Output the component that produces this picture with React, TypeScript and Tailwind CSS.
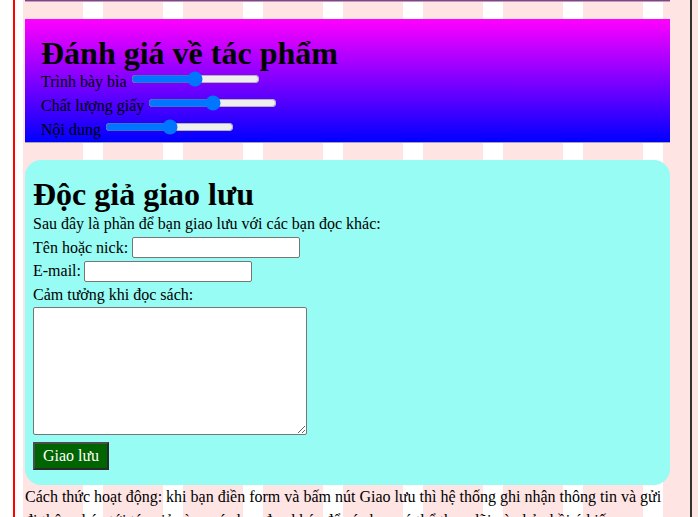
export default function App() {
  const inputCls =
    "h-[21px] w-[168px] rounded-[2px] border border-[#767676] bg-white px-[2px] py-px font-['Liberation_Sans',Arial,sans-serif] text-[13.33px]";
  return (
    <div className="flex h-[517px] overflow-hidden bg-[repeating-linear-gradient(90deg,#ffe4e4_0px,#ffe4e4_3px,#ffffff_3px,#ffffff_23px,#ffe4e4_23px,#ffe4e4_80px)] font-['Liberation_Serif',serif] text-[16px] text-black">
      <div className="w-[13px] shrink-0 bg-white" />
      <div className="w-[679px] shrink-0 border-l-2 border-r-2 border-l-[#ff0000] border-r-[#333333] pl-[10px] pr-[20px]">
        <div className="h-px bg-[#8a3d8a]" />
        <div className="h-px bg-[#b4a4b4]" />
        <section className="mt-[17px] border-b border-[#a3a3b8] bg-[linear-gradient(to_bottom,#ff00ff,#0000ff)] pl-4 pt-[17px]">
          <h1 className="text-[32px] font-bold leading-[34px]">Đánh giá về tác phẩm</h1>
          <div className="h-6 leading-6">
            Trình bày bìa <input type="range" defaultValue={50} className="mr-[2px]" />
          </div>
          <div className="h-6 leading-6">
            Chất lượng giấy <input type="range" defaultValue={50} className="mr-[2px]" />
          </div>
          <div className="h-6 leading-6">
            Nội dung <input type="range" defaultValue={50} className="mr-[2px]" />
          </div>
        </section>
        <section className="mt-[17px] rounded-2xl bg-[#97fcf3] px-2 pb-[15px] pt-4">
          <h1 className="text-[32px] font-bold leading-[36px]">Độc giả giao lưu</h1>
          <div className="h-[23.5px] leading-[23.5px]">
            Sau đây là phần để bạn giao lưu với các bạn đọc khác:
          </div>
          <div className="flex h-[23.5px] items-start leading-[23.5px]">
            <span>Tên hoặc nick:</span>
            <input type="text" className={inputCls + " ml-[4px] mt-px"} />
          </div>
          <div className="flex h-[23.5px] items-start leading-[23.5px]">
            <span>E-mail:</span>
            <input type="text" className={inputCls + " ml-[3px] mt-[1.5px]"} />
          </div>
          <div className="h-[23.5px] leading-[23.5px]">Cảm tưởng khi đọc sách:</div>
          <textarea className="mt-px block h-[128px] w-[274px] rounded-[2px] border border-[#767676] bg-white" />
          <button
            type="button"
            className="mt-[7px] block h-[28px] w-[76px] border-2 border-[#4d4d4d] border-b-[#2a2a2a] border-r-[#2a2a2a] bg-[#006400] text-[16px] text-white"
          >
            Giao lưu
          </button>
        </section>
        <p className="leading-6">
          Cách thức hoạt động: khi bạn điền form và bấm nút Giao lưu thì hệ thống ghi nhận thông tin và gửi
          đi thông báo tới tác giả cùng các bạn đọc khác để các bạn có thể theo dõi và phản hồi ý kiến qua email.
        </p>
      </div>
    </div>
  );
}
